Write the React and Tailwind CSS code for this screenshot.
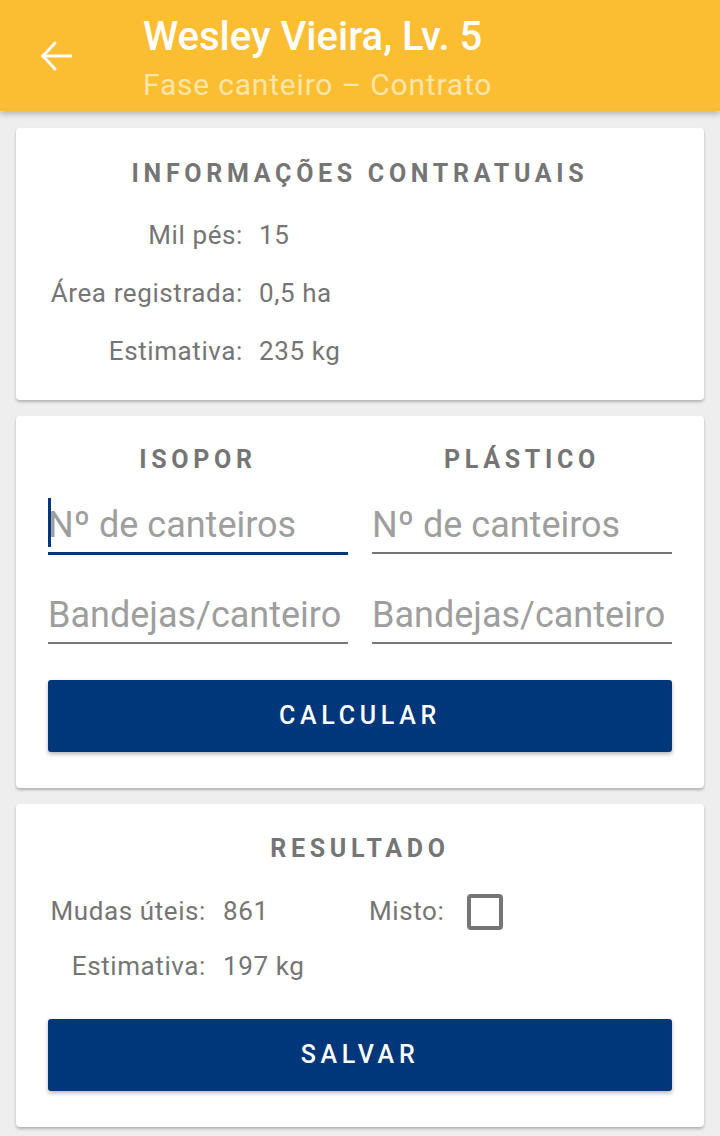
import React from "react";

function Row({ label, value, labelW }) {
  return (
    <div className="flex h-[58px] items-center">
      <div className="shrink-0 text-right" style={{ width: labelW }}>{label}</div>
      <div className="pl-[16px]">{value}</div>
    </div>
  );
}

const heading = "text-center text-[25px] leading-[30px] font-bold tracking-[4.7px] text-[#757575]";
const btn = "w-full h-[72px] bg-[#00367a] rounded-[3px] shadow-[0_2px_4px_rgba(0,0,0,0.3)] text-white text-[25px] font-medium tracking-[4.7px]";
const ph = "text-[36px] text-[#9e9e9e] leading-none whitespace-nowrap";

export default function App() {
  return (
    <div className="w-[720px] h-[1136px] bg-[#eeeeee] overflow-hidden" style={{ fontFamily: "Roboto, 'Noto Sans', sans-serif" }}>
      <header className="h-[111px] bg-[#fbbd32] flex items-start shadow-[0_3px_6px_rgba(0,0,0,0.25)] relative z-10">
        <div className="w-[143px] shrink-0 pt-[40px] pl-[40px]">
          <svg width="32" height="32" viewBox="0 0 32 32" fill="none" stroke="white" strokeWidth="3" strokeLinecap="square">
            <path d="M3 16 H31" />
            <path d="M15 3 L3 16 L15 29" strokeLinecap="round" strokeLinejoin="miter" />
          </svg>
        </div>
        <div className="pt-[17px]">
          <div className="text-white text-[40px] leading-[40px] font-medium">Wesley Vieira, Lv. 5</div>
          <div className="text-[#fde5a8] text-[30px] leading-[30px] tracking-[0.8px] mt-[13px]">Fase canteiro – Contrato</div>
        </div>
      </header>

      <div className="px-[16px] pt-[17px] flex flex-col gap-[16px]">
        <section className="bg-white rounded-[4px] shadow-[0_2px_3px_rgba(0,0,0,0.25)] pt-[31px] pb-[20px] text-[#757575] text-[26px] tracking-[0.6px]">
          <div className={heading}>INFORMAÇÕES CONTRATUAIS</div>
          <div className="mt-[17px]">
            <Row label="Mil pés:" value="15" labelW={227} />
            <Row label="Área registrada:" value="0,5 ha" labelW={227} />
            <Row label="Estimativa:" value="235 kg" labelW={227} />
          </div>
        </section>

        <section className="bg-white rounded-[4px] shadow-[0_2px_3px_rgba(0,0,0,0.25)] pt-[29px] pb-[36px] px-[32px]">
          <div className="grid grid-cols-2 gap-x-[24px]">
            <div className={heading}>ISOPOR</div>
            <div className={heading}>PLÁSTICO</div>
            <div className="mt-[18px] h-[62px] border-b-[3px] border-[#00367a] relative flex items-end pb-[9px]">
              <span className="absolute left-0 top-[5px] w-[3px] h-[49px] bg-[#00367a]" />
              <span className={ph}>Nº de canteiros</span>
            </div>
            <div className="mt-[18px] h-[61px] border-b-[2px] border-[#757575] flex items-end pb-[9px]">
              <span className={ph}>Nº de canteiros</span>
            </div>
            <div className="mt-[27px] h-[62px] border-b-[2px] border-[#757575] flex items-end pb-[9px]">
              <span className={ph}>Bandejas/canteiro</span>
            </div>
            <div className="mt-[27px] h-[62px] border-b-[2px] border-[#757575] flex items-end pb-[9px]">
              <span className={ph}>Bandejas/canteiro</span>
            </div>
          </div>
          <button className={`mt-[36px] ${btn}`}>CALCULAR</button>
        </section>

        <section className="bg-white rounded-[4px] shadow-[0_2px_3px_rgba(0,0,0,0.25)] pt-[30px] pb-[36px] px-[32px] text-[#757575] text-[26px] tracking-[0.6px]">
          <div className={heading}>RESULTADO</div>
          <div className="mt-[20px]">
            <div className="flex h-[55px] items-center">
              <div className="w-[158px] shrink-0 text-right">Mudas úteis:</div>
              <div className="pl-[17px] w-[163px] shrink-0">861</div>
              <div>Misto:</div>
              <div className="ml-[23px] w-[36px] h-[36px] border-[4px] border-[#757575] rounded-[4px]" />
            </div>
            <div className="flex h-[55px] items-center">
              <div className="w-[158px] shrink-0 text-right">Estimativa:</div>
              <div className="pl-[17px]">197 kg</div>
            </div>
          </div>
          <button className={`mt-[25px] ${btn}`}>SALVAR</button>
        </section>
      </div>
    </div>
  );
}
